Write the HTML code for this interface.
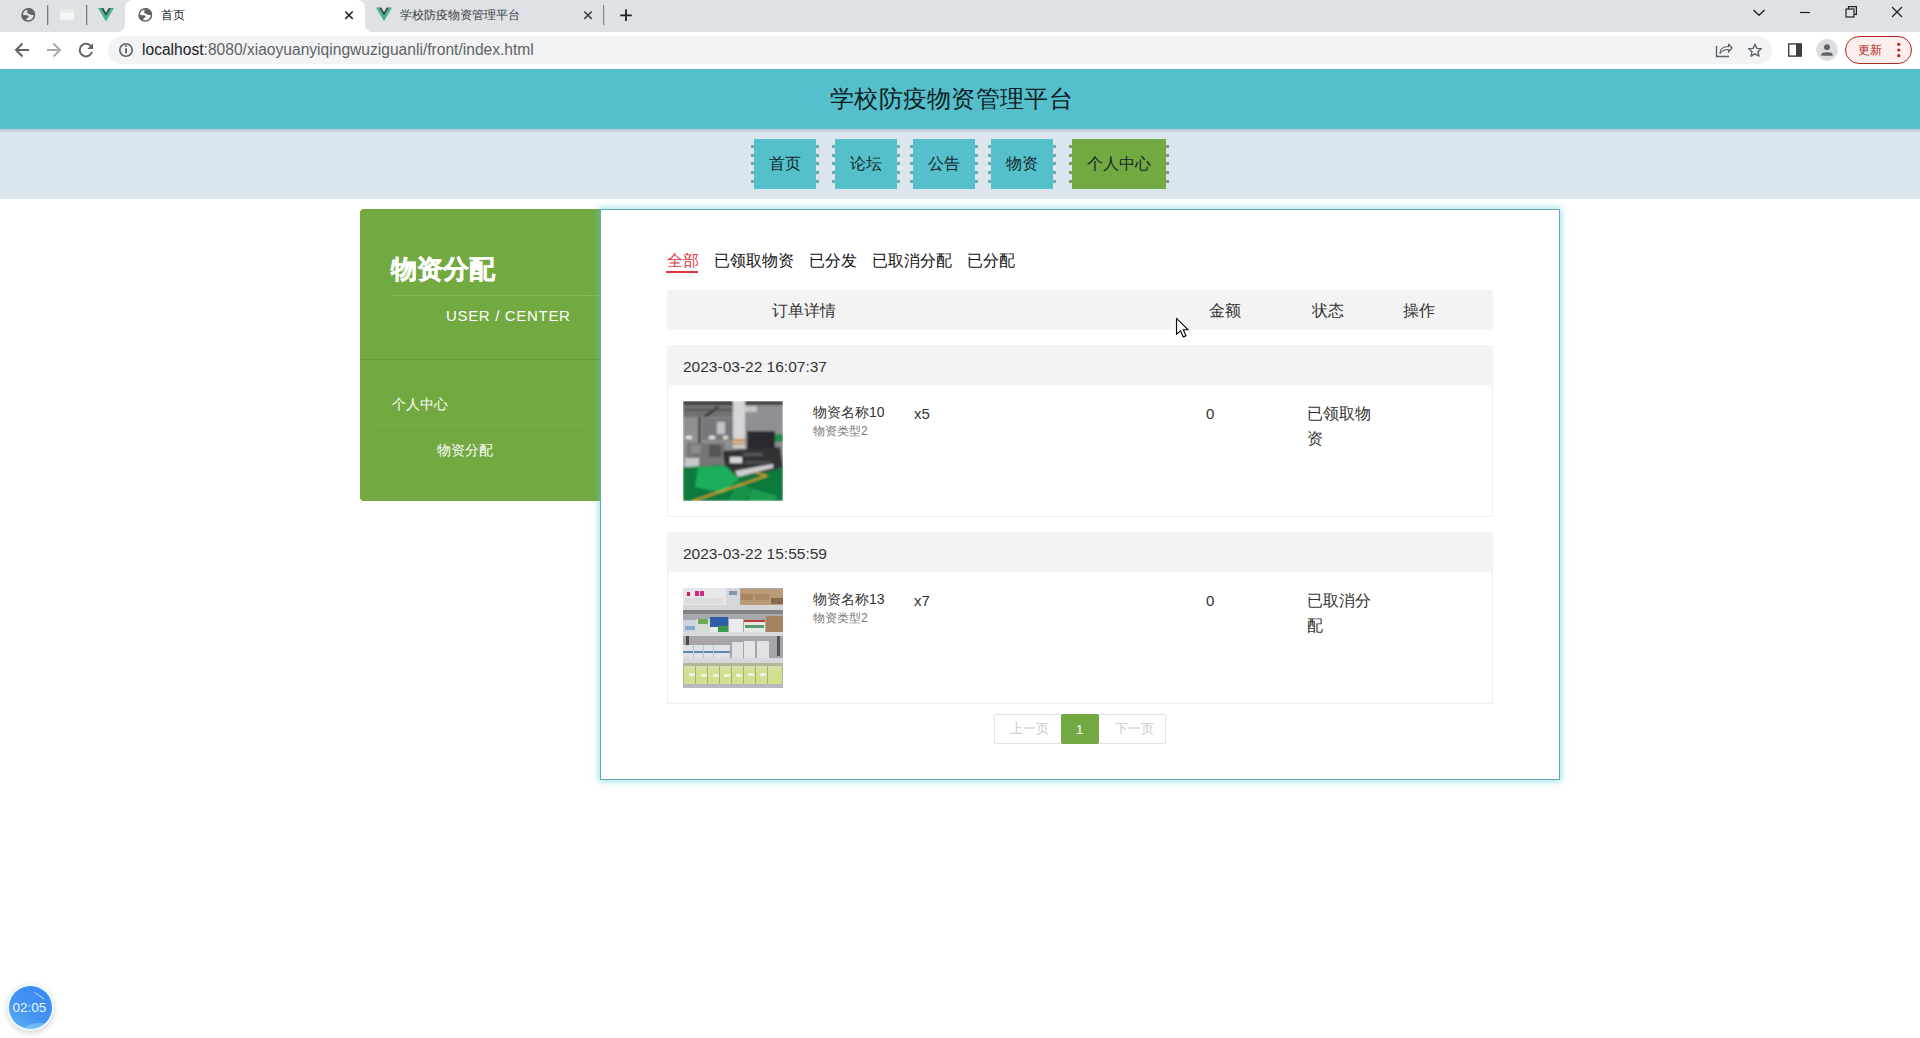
<!DOCTYPE html>
<html><head><meta charset="utf-8">
<style>
*{margin:0;padding:0;box-sizing:border-box}
html,body{width:1920px;height:1038px;overflow:hidden;background:#fff;font-family:"Liberation Sans",sans-serif;position:relative}
.a{position:absolute}
.t{position:absolute;white-space:nowrap;line-height:1}
/* chrome */
#tabs{left:0;top:0;width:1920px;height:32px;background:#dee1e6}
#toolbar{left:0;top:32px;width:1920px;height:37px;background:#fff}
#omni{left:108px;top:36px;width:1664px;height:28px;background:#f1f3f4;border-radius:14px}
#acttab{left:125px;top:0;width:240px;height:32px;background:#fff;border-radius:8px 8px 0 0}
/* page */
#hdr{left:0;top:69px;width:1920px;height:60px;background:#55bfcb}
#nav{left:0;top:129px;width:1920px;height:70px;background:#dae5ed}
#navshadow{left:0;top:129px;width:1920px;height:4px;background:linear-gradient(#b9c6cf,#dae5ed)}
.btn{position:absolute;top:139px;height:50px;background:#55bfcb;color:#14262b;font-size:16px;line-height:50px;text-align:center}
.btn::before,.btn::after{content:"";position:absolute;top:5.5px;width:3px;height:40px;background:linear-gradient(var(--dc),var(--dc)) 0 0/3px 3px no-repeat,linear-gradient(var(--dc),var(--dc)) 0 9px/3px 3px no-repeat,linear-gradient(var(--dc),var(--dc)) 0 17.5px/3px 3px no-repeat,linear-gradient(var(--dc),var(--dc)) 0 26.5px/3px 3px no-repeat,linear-gradient(var(--dc),var(--dc)) 0 35px/3px 3px no-repeat}
.btn::before{left:-3px}
.btn::after{right:-3px}
#side{left:360px;top:209px;width:240px;height:292px;background:#72a940;border-radius:4px 0 0 4px}
#main{left:600px;top:209px;width:960px;height:571px;background:#fff;border:1px solid #6aa7ad;box-shadow:0 0 7px 1px rgba(80,200,215,.6)}
</style></head><body>
<div id="tabs" class="a"></div>
<div id="acttab" class="a"></div>
<div id="toolbar" class="a"></div>
<div id="omni" class="a"></div>


<!-- tab strip icons -->
<svg class="a" style="left:0;top:0" width="660" height="32" viewBox="0 0 660 32">
  <!-- globe icon tab 1 -->
  <g transform="translate(28.299999999999997,14.9)"><clipPath id="gc28"><circle r="6.9"/></clipPath><circle r="6.9" fill="#5f6368"/><circle r="5.35" fill="#dee1e6"/><g clip-path="url(#gc28)" fill="#5f6368"><path d="M-0.8,-7 L-0.8,-4.1 C-1.2,-3 -1.2,-2 -0.9,-1.6 C0.3,-1.3 1.2,-0.9 1.6,-0.6 C2.3,0 2.8,0.2 3.5,0.1 L7,0.1 L7,-7 Z"/><path d="M-7,0.1 L-0.8,0.3 C0.1,0.8 0.5,1.5 0.4,2 C0,2.6 -1.5,3 -1.7,3.6 C-2,4.2 -2.2,4.8 -2.3,7 L-7,7 Z"/></g></g>
  <rect x="47" y="5" width="1.3" height="20" fill="#5f6368" opacity=".8"/>
  <!-- window-ish favicon -->
  <rect x="60" y="9" width="14" height="11" fill="#f4f6f7" stroke="#e4eae6" stroke-width="0.8"/>
  <rect x="60" y="9" width="14" height="3.5" fill="#e8ece8"/>
  <rect x="86" y="5" width="1.3" height="20" fill="#5f6368" opacity=".8"/>
  <!-- vue logo -->
  <g transform="translate(98,8)">
    <path d="M0,0 L3.1,0 L8,8.5 L12.9,0 L16,0 L8,13.6 Z" fill="#41b883"/>
    <path d="M3.1,0 L5.3,0 L8,4.7 L10.7,0 L12.9,0 L8,8.5 Z" fill="#35495e"/>
  </g>
  <!-- active tab globe -->
  <g transform="translate(145.3,14.9)"><clipPath id="gc145"><circle r="6.9"/></clipPath><circle r="6.9" fill="#5f6368"/><circle r="5.35" fill="#fff"/><g clip-path="url(#gc145)" fill="#5f6368"><path d="M-0.8,-7 L-0.8,-4.1 C-1.2,-3 -1.2,-2 -0.9,-1.6 C0.3,-1.3 1.2,-0.9 1.6,-0.6 C2.3,0 2.8,0.2 3.5,0.1 L7,0.1 L7,-7 Z"/><path d="M-7,0.1 L-0.8,0.3 C0.1,0.8 0.5,1.5 0.4,2 C0,2.6 -1.5,3 -1.7,3.6 C-2,4.2 -2.2,4.8 -2.3,7 L-7,7 Z"/></g></g>
  <!-- close x tab1 -->
  <path d="M345.3,11.5 L352.7,18.9 M352.7,11.5 L345.3,18.9" stroke="#202124" stroke-width="1.5"/>
  <!-- vue logo tab2 -->
  <g transform="translate(376,7.5)">
    <path d="M0,0 L3.1,0 L8,8.5 L12.9,0 L16,0 L8,13.8 Z" fill="#41b883"/>
    <path d="M3.1,0 L5.3,0 L8,4.7 L10.7,0 L12.9,0 L8,8.5 Z" fill="#35495e"/>
  </g>
  <path d="M584.3,11.5 L591.7,18.9 M591.7,11.5 L584.3,18.9" stroke="#3c4043" stroke-width="1.5"/>
  <rect x="603" y="5" width="1.2" height="20" fill="#80868b"/>
  <path d="M626,9.5 L626,21 M620.2,15.3 L631.8,15.3" stroke="#202124" stroke-width="1.8"/>
</svg>
<div class="t" style="left:161px;top:9px;font-size:12px;color:#202124">首页</div>
<div class="t" style="left:400px;top:9px;font-size:12px;color:#3c4043">学校防疫物资管理平台</div>
<!-- curved tab corners -->
<div class="a" style="left:117px;top:24px;width:8px;height:8px;background:radial-gradient(circle at 0 0,#dee1e6 8px,#fff 8.5px)"></div>
<div class="a" style="left:365px;top:24px;width:8px;height:8px;background:radial-gradient(circle at 100% 0,#dee1e6 8px,#fff 8.5px)"></div>

<!-- window controls -->
<svg class="a" style="left:1740px;top:0" width="180" height="32" viewBox="1740 0 180 32">
  <path d="M1753.5,10 L1759,15.3 L1764.5,10" stroke="#202124" stroke-width="1.3" fill="none"/>
  <path d="M1800,12.5 L1810,12.5" stroke="#202124" stroke-width="1.2"/>
  <rect x="1846" y="9" width="8" height="8" fill="none" stroke="#202124" stroke-width="1.2"/>
  <path d="M1848.5,9 L1848.5,6.6 L1856.4,6.6 L1856.4,14.4 L1854,14.4" fill="none" stroke="#202124" stroke-width="1.2"/>
  <path d="M1892,7 L1902,17 M1902,7 L1892,17" stroke="#202124" stroke-width="1.3"/>
</svg>

<!-- toolbar icons -->
<svg class="a" style="left:0;top:32px" width="140" height="37" viewBox="0 32 140 37">
  <path d="M29,50 L16.5,50 M22.5,43.5 L16,50 L22.5,56.5" stroke="#5f6368" stroke-width="2" fill="none"/>
  <path d="M47,50 L59.5,50 M53.5,43.5 L60,50 L53.5,56.5" stroke="#a6a9ac" stroke-width="2" fill="none"/>
  <path d="M91.5,47 A6.3,6.3 0 1 0 92,52" stroke="#5f6368" stroke-width="2" fill="none"/>
  <path d="M93,43.3 L93,49 L87.3,49 Z" fill="#5f6368"/>
  <circle cx="126" cy="50" r="6.2" fill="none" stroke="#5f6368" stroke-width="1.6"/>
  <rect x="125.1" y="48.3" width="1.9" height="5" fill="#5f6368"/>
  <circle cx="126" cy="46" r="1.1" fill="#5f6368"/>
</svg>
<div class="t" style="left:142px;top:41.5px;font-size:15.6px;color:#202124"><span>localhost</span><span style="color:#5f6368">:8080/xiaoyuanyiqingwuziguanli/front/index.html</span></div>

<svg class="a" style="left:1700px;top:32px" width="220" height="37" viewBox="1700 32 220 37">
  <!-- share -->
  <path d="M1716.5,46 L1716.5,56.5 L1729,56.5" stroke="#5f6368" stroke-width="1.4" fill="none"/>
  <path d="M1720,53.5 C1720,48.5 1723.5,46.5 1728.5,46.5 L1728.5,44 L1732,48 L1728.5,52 L1728.5,49.5 C1724.5,49.5 1722,50.5 1720,53.5 Z" stroke="#5f6368" stroke-width="1.2" fill="none" stroke-linejoin="round"/>
  <!-- star -->
  <path d="M1755,44.2 L1756.9,48.4 L1761.3,48.8 L1757.9,51.7 L1759,56.1 L1755,53.8 L1751,56.1 L1752.1,51.7 L1748.7,48.8 L1753.1,48.4 Z" stroke="#5f6368" stroke-width="1.4" fill="none" stroke-linejoin="round"/>
  <!-- side panel -->
  <rect x="1788.7" y="43.9" width="12.6" height="12.2" fill="none" stroke="#3c4043" stroke-width="1.4"/>
  <rect x="1796" y="43.9" width="5.3" height="12.2" fill="#3c4043"/>
  <!-- avatar -->
  <circle cx="1827" cy="49.8" r="10.8" fill="#dadce0"/>
  <circle cx="1827" cy="47.2" r="2.9" fill="#5f6368"/>
  <path d="M1821.3,55.8 L1821.3,54.6 C1821.3,51.6 1832.7,51.6 1832.7,54.6 L1832.7,55.8 Z" fill="#5f6368"/>
  <!-- update pill -->
  <rect x="1845.5" y="36.5" width="66" height="27" rx="13.5" fill="#fbeeed" stroke="#b3261e" stroke-width="1"/>
  <circle cx="1898.8" cy="44.3" r="1.6" fill="#b3261e"/>
  <circle cx="1898.8" cy="50" r="1.6" fill="#b3261e"/>
  <circle cx="1898.8" cy="55.7" r="1.6" fill="#b3261e"/>
</svg>
<div class="t" style="left:1858px;top:44px;font-size:12px;color:#b3261e">更新</div>

<div id="hdr" class="a"></div>
<div id="nav" class="a"></div>
<div id="navshadow" class="a"></div>
<div class="t" style="left:830px;top:86.5px;font-size:24.4px;letter-spacing:0.28px;color:#0b1d22">学校防疫物资管理平台</div>

<div class="btn" style="left:754px;width:62px;--dc:#6aaab2">首页</div>
<div class="btn" style="left:835px;width:62px;--dc:#6aaab2">论坛</div>
<div class="btn" style="left:913px;width:62px;--dc:#6aaab2">公告</div>
<div class="btn" style="left:991px;width:62px;--dc:#6aaab2">物资</div>
<div class="btn" style="left:1072px;width:94px;background:#72a940;--dc:#7f9a68">个人中心</div>

<div id="side" class="a"></div>
<div id="main" class="a"></div>


<!-- sidebar content -->
<div class="t" style="left:391px;top:256px;font-size:26px;font-weight:bold;color:#fff;-webkit-text-stroke:0.4px #fff">物资分配</div>
<div class="a" style="left:392px;top:295px;width:208px;height:1px;background:#85b85a"></div>
<div class="t" style="left:446px;top:308px;font-size:15px;color:#fff;letter-spacing:0.67px">USER / CENTER</div>
<div class="a" style="left:360px;top:359px;width:240px;height:1px;background:#67993a"></div>
<div class="t" style="left:392px;top:397px;font-size:14px;color:#fff">个人中心</div>
<div class="a" style="left:376px;top:425px;width:208px;height:1px;background:#7aae4c"></div>
<div class="t" style="left:437px;top:443px;font-size:14px;color:#fff">物资分配</div>

<!-- main content -->
<div class="t" style="left:666.5px;top:253px;font-size:16px;color:#e0353b">全部</div>
<div class="a" style="left:666px;top:271px;width:32px;height:2px;background:#e0353b"></div>
<div class="t" style="left:714px;top:253px;font-size:16px;color:#111">已领取物资</div>
<div class="t" style="left:809px;top:253px;font-size:16px;color:#111">已分发</div>
<div class="t" style="left:872px;top:253px;font-size:16px;color:#111">已取消分配</div>
<div class="t" style="left:967px;top:253px;font-size:16px;color:#111">已分配</div>

<div class="a" style="left:667px;top:290px;width:826px;height:40px;background:#f3f3f3"></div>
<div class="t" style="left:772px;top:303px;font-size:16px;color:#333">订单详情</div>
<div class="t" style="left:1208.5px;top:303px;font-size:16px;color:#333">金额</div>
<div class="t" style="left:1312px;top:303px;font-size:16px;color:#333">状态</div>
<div class="t" style="left:1402.5px;top:303px;font-size:16px;color:#333">操作</div>

<!-- order 1 -->
<div class="a" style="left:667px;top:345px;width:826px;height:172px;border:1px solid #efefef;border-top:none"></div>
<div class="a" style="left:667px;top:345px;width:826px;height:40px;background:#f3f3f3"></div>
<div class="t" style="left:683px;top:358.5px;font-size:15.5px;color:#333">2023-03-22 16:07:37</div>
<svg class="a" style="left:683px;top:401px" width="100" height="100" viewBox="0 0 100 100">
<defs><filter id="bl1" x="0" y="0" width="100%" height="100%"><feGaussianBlur stdDeviation="0.8"/></filter>
<linearGradient id="fl" x1="0" y1="0" x2="1" y2="1"><stop offset="0" stop-color="#19a553"/><stop offset="1" stop-color="#0b6a34"/></linearGradient></defs>
<g filter="url(#bl1)">
<rect width="100" height="100" fill="#8a8b8d"/>
<rect x="0" y="0" width="100" height="4" fill="#3e3f41"/>
<rect x="0" y="4" width="50" height="12" fill="#707173"/>
<path d="M18,17 L34,5 L36,7 L20,19 Z" fill="#3a3a3c"/>
<rect x="0" y="8" width="50" height="1.5" fill="#4a4a4c"/>
<rect x="0" y="16" width="50" height="30" fill="#8f9092"/>
<rect x="19" y="17" width="31" height="22" fill="#77787b"/>
<rect x="34" y="21" width="8" height="12" fill="#c4c4c6"/>
<rect x="15" y="16" width="3" height="28" fill="#4e4e50"/>
<rect x="3" y="35" width="6" height="3" fill="#ececec"/>
<rect x="26" y="35" width="6" height="3" fill="#e6e6e6"/>
<rect x="40" y="35" width="5" height="3" fill="#e0e0e0"/>
<rect x="50" y="0" width="12" height="47" fill="#d6d6d8"/>
<rect x="50" y="38" width="12" height="2.5" fill="#c98a30"/>
<rect x="50" y="42" width="12" height="2" fill="#c98a30"/>
<rect x="62" y="4" width="38" height="30" fill="#8f9093"/>
<rect x="62" y="5" width="12" height="6" fill="#c4c4c6"/>
<rect x="64" y="30" width="28" height="20" fill="#2a2b2e"/>
<rect x="92" y="33" width="8" height="8" fill="#1c8a4a"/>
<rect x="4" y="42" width="38" height="24" fill="#767677"/>
<rect x="8" y="44" width="10" height="8" fill="#8c8c8c"/>
<rect x="26" y="44" width="12" height="12" fill="#555"/>
<path d="M40,50 L97,46 L100,66 L90,70 L55,76 L42,68 Z" fill="#303236"/>
<rect x="47" y="56" width="12" height="6" fill="#d8d8da"/>
<rect x="60" y="52" width="20" height="3" fill="#55575b"/>
<rect x="62" y="60" width="25" height="3" fill="#4a4c50"/>
<path d="M52,70 L90,63 L90,67 L55,76 Z" fill="#cfcfd0"/>
<rect x="2" y="57" width="14" height="24" fill="#c9c8c6"/>
<rect x="4" y="65" width="10" height="14" fill="#e8e8e6"/>
<path d="M0,66 L42,64 L55,76 L88,70 L100,66 L100,100 L0,100 Z" fill="#0c7a3c"/>
<path d="M15,66 L42,65 L56,78 L40,92 L12,86 Z" fill="#1fae5a"/>
<path d="M55,80 L72,90 L60,100 L45,100 Z" fill="#17934a"/>
<path d="M70,88 L95,95 L90,100 L65,100 Z" fill="#1a9c50"/>
<path d="M10,100 L83,75 L73,71" stroke="#e0a020" stroke-width="1.6" fill="none"/>
</g></svg>
<div class="t" style="left:813px;top:405px;font-size:14px;color:#333">物资名称10</div>
<div class="t" style="left:813px;top:425px;font-size:12px;color:#777">物资类型2</div>
<div class="t" style="left:914px;top:406px;font-size:15px;color:#333">x5</div>
<div class="t" style="left:1206px;top:406px;font-size:15px;color:#333">0</div>
<div class="t" style="left:1307px;top:406px;font-size:16px;color:#333">已领取物</div>
<div class="t" style="left:1307px;top:431px;font-size:16px;color:#333">资</div>

<!-- order 2 -->
<div class="a" style="left:667px;top:532px;width:826px;height:172px;border:1px solid #efefef;border-top:none"></div>
<div class="a" style="left:667px;top:532px;width:826px;height:40px;background:#f3f3f3"></div>
<div class="t" style="left:683px;top:545.5px;font-size:15.5px;color:#333">2023-03-22 15:55:59</div>
<svg class="a" style="left:683px;top:588px" width="100" height="100" viewBox="0 0 100 100">
<defs><filter id="bl2" x="0" y="0" width="100%" height="100%"><feGaussianBlur stdDeviation="0.7"/></filter></defs>
<g filter="url(#bl2)">
<rect width="100" height="100" fill="#aaa9ae"/>
<rect x="0" y="0" width="43" height="17" fill="#e9e6e9"/>
<rect x="4" y="4" width="3" height="4" fill="#c0206a"/>
<rect x="12" y="3" width="4" height="5" fill="#d02a80"/>
<rect x="17" y="3" width="4" height="5" fill="#d02a80"/>
<rect x="2" y="10" width="38" height="6" fill="#dcdcde"/>
<rect x="43" y="0" width="14" height="17" fill="#d4d8dc"/>
<rect x="46" y="3" width="8" height="4" fill="#8898a8"/>
<rect x="57" y="1" width="43" height="16" fill="#b99b78"/>
<rect x="58" y="6" width="12" height="6" fill="#a78560"/>
<rect x="72" y="6" width="14" height="6" fill="#a88a66"/>
<rect x="88" y="10" width="12" height="6" fill="#8a6a50"/>
<rect x="0" y="17" width="100" height="5" fill="#d6d6d8"/>
<rect x="0" y="22" width="100" height="4" fill="#828288"/>
<rect x="0" y="27" width="100" height="17" fill="#a8a7ac"/>
<rect x="0" y="32" width="13" height="12" fill="#cdd6e0"/>
<rect x="2" y="38" width="10" height="4" fill="#8aa8c8"/>
<rect x="13" y="31" width="14" height="13" fill="#d6dcd0"/>
<rect x="15" y="31" width="10" height="5" fill="#6aaa5a"/>
<rect x="27" y="29" width="18" height="10" fill="#2f5fa8"/>
<rect x="35" y="38" width="10" height="6" fill="#3a9a46"/>
<rect x="27" y="39" width="8" height="5" fill="#e6e8ea"/>
<rect x="46" y="31" width="14" height="13" fill="#e9eaee"/>
<rect x="61" y="32" width="21" height="12" fill="#e6eae6"/>
<rect x="61" y="32" width="21" height="2" fill="#c03a3a"/>
<rect x="62" y="37" width="19" height="3" fill="#5a9a6a"/>
<rect x="83" y="28" width="17" height="16" fill="#a48464"/>
<rect x="0" y="44" width="100" height="4" fill="#dadadd"/>
<rect x="0" y="48" width="100" height="22" fill="#a6a5aa"/>
<rect x="3" y="48" width="3" height="10" fill="#4a4a4e"/>
<rect x="94" y="48" width="3" height="20" fill="#555559"/>
<rect x="0" y="57" width="47" height="13" fill="#dde1e8"/>
<rect x="0" y="63" width="47" height="2" fill="#6088b0"/>
<rect x="10" y="57" width="1" height="13" fill="#bfc4ca"/>
<rect x="20" y="57" width="1" height="13" fill="#bfc4ca"/>
<rect x="30" y="57" width="1" height="13" fill="#bfc4ca"/>
<rect x="49" y="54" width="11" height="16" fill="#e2e2e5"/>
<rect x="61" y="53" width="11" height="17" fill="#e4e4e6"/>
<rect x="74" y="53" width="12" height="17" fill="#e2e2e4"/>
<rect x="0" y="70" width="100" height="5" fill="#d8d8db"/>
<rect x="0" y="75" width="100" height="22" fill="#b4b69a"/>
<rect x="1" y="78" width="98" height="20" fill="#cfe08f"/>
<rect x="1" y="78" width="98" height="4" fill="#d8dea8"/><rect x="12" y="78" width="1" height="20" fill="#aab070"/><rect x="24" y="78" width="1" height="20" fill="#aab070"/><rect x="36" y="78" width="1" height="20" fill="#aab070"/><rect x="48" y="78" width="1" height="20" fill="#aab070"/><rect x="60" y="78" width="1" height="20" fill="#aab070"/><rect x="72" y="78" width="1" height="20" fill="#aab070"/><rect x="84" y="78" width="1" height="20" fill="#aab070"/>
<rect x="6" y="85" width="6" height="3" fill="#eef0e0"/>
<rect x="18" y="86" width="6" height="3" fill="#eef0e0"/>
<rect x="30" y="86" width="6" height="3" fill="#eef0e0"/>
<rect x="41" y="86" width="6" height="3" fill="#eef0e0"/>
<rect x="53" y="86" width="6" height="3" fill="#eef0e0"/>
<rect x="65" y="85" width="6" height="3" fill="#eef0e0"/>
<rect x="77" y="85" width="6" height="3" fill="#eef0e0"/>
<rect x="0" y="96" width="100" height="4" fill="#b9b9bd"/>
</g></svg>
<div class="t" style="left:813px;top:592px;font-size:14px;color:#333">物资名称13</div>
<div class="t" style="left:813px;top:612px;font-size:12px;color:#777">物资类型2</div>
<div class="t" style="left:914px;top:593px;font-size:15px;color:#333">x7</div>
<div class="t" style="left:1206px;top:593px;font-size:15px;color:#333">0</div>
<div class="t" style="left:1307px;top:593px;font-size:16px;color:#333">已取消分</div>
<div class="t" style="left:1307px;top:618px;font-size:16px;color:#333">配</div>

<!-- pagination -->
<div class="a" style="left:994px;top:714px;width:172px;height:30px;border:1px solid #e2e2e2;border-radius:2px"></div>
<div class="t" style="left:1009.5px;top:722.5px;font-size:12.5px;color:#cacaca">上一页</div>
<div class="a" style="left:1061px;top:714px;width:38px;height:30px;background:#72a940;border-radius:2px"></div>
<div class="t" style="left:1076px;top:723px;font-size:13px;color:#fff">1</div>
<div class="t" style="left:1114.5px;top:722.5px;font-size:12.5px;color:#cacaca">下一页</div>

<!-- cursor -->
<svg class="a" style="left:1170px;top:312px" width="26" height="30" viewBox="1170 312 26 30">
<path d="M1176.5,318.3 L1176.5,334.3 L1180.4,330.8 L1183.3,337 L1186,335.7 L1183.3,329.8 L1188.2,329.8 Z" fill="#fff" stroke="#000" stroke-width="1.1" stroke-linejoin="round"/>
</svg>
<!-- timer -->
<div class="a" style="left:7px;top:984px;width:47px;height:47px;border-radius:50%;background:#eafaff;box-shadow:0 2px 6px rgba(0,0,0,.18)"></div>
<div class="a" style="left:9px;top:986px;width:43px;height:43px;border-radius:50%;background:linear-gradient(35deg,#5fb4f6 0%,#4596f2 40%,#3585f5 100%);overflow:hidden">
<div class="a" style="left:14px;top:37px;width:34px;height:16px;border-radius:50%;background:rgba(150,220,255,.45)"></div>
</div>
<svg class="a" style="left:30px;top:990px" width="20" height="16"><path d="M4.5,2.2 L14,9" stroke="rgba(220,240,255,.8)" stroke-width="1" fill="none"/></svg>
<div class="t" style="left:12.5px;top:1001px;font-size:13.5px;color:#e8f6ff">02:05</div>
</body></html>
